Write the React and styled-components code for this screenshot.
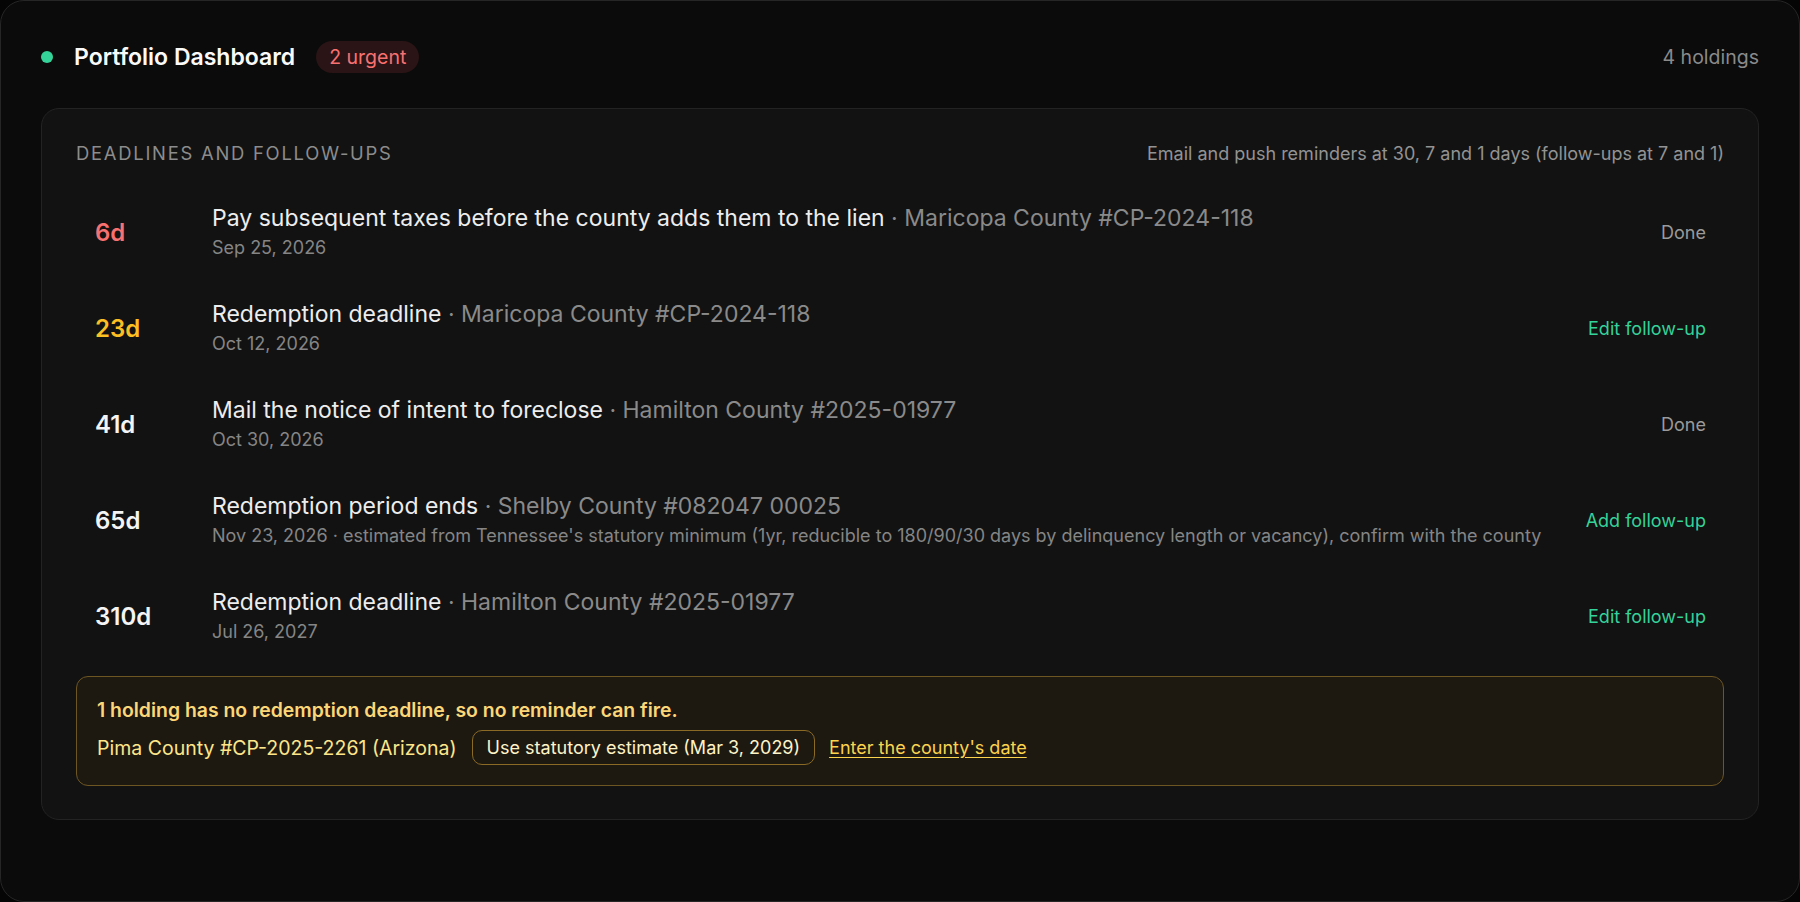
import React from 'react';
import styled, { createGlobalStyle } from 'styled-components';

const GlobalStyle = createGlobalStyle`
  html, body {
    margin: 0;
    padding: 0;
    background: #050505;
  }
  * {
    box-sizing: border-box;
  }
  body {
    font-family: Inter, "Noto Sans", "Liberation Sans", sans-serif;
    -webkit-font-smoothing: antialiased;
  }
`;

const deadlines = [
  {
    days: '6d',
    tone: 'urgent',
    title: 'Pay subsequent taxes before the county adds them to the lien',
    holding: 'Maricopa County #CP-2024-118',
    date: 'Sep 25, 2026',
    action: 'Done',
  },
  {
    days: '23d',
    tone: 'soon',
    title: 'Redemption deadline',
    holding: 'Maricopa County #CP-2024-118',
    date: 'Oct 12, 2026',
    action: 'Edit follow-up',
  },
  {
    days: '41d',
    title: 'Mail the notice of intent to foreclose',
    holding: 'Hamilton County #2025-01977',
    date: 'Oct 30, 2026',
    action: 'Done',
  },
  {
    days: '65d',
    title: 'Redemption period ends',
    holding: 'Shelby County #082047 00025',
    date: "Nov 23, 2026 · estimated from Tennessee's statutory minimum (1yr, reducible to 180/90/30 days by delinquency length or vacancy), confirm with the county",
    action: 'Add follow-up',
  },
  {
    days: '310d',
    title: 'Redemption deadline',
    holding: 'Hamilton County #2025-01977',
    date: 'Jul 26, 2027',
    action: 'Edit follow-up',
  },
];

const dayColors = {
  urgent: '#f87171',
  soon: '#fbbf24',
  normal: '#f4f4f5',
};

const App = () => {
  return (
    <>
      <GlobalStyle />
      <Frame>
        <Header>
          <HeaderLeft>
            <StatusDot />
            <Title>Portfolio Dashboard</Title>
            <UrgentBadge>2 urgent</UrgentBadge>
          </HeaderLeft>
          <HoldingCount>4 holdings</HoldingCount>
        </Header>

        <Panel>
          <PanelHead>
            <Caption>Deadlines and follow-ups</Caption>
            <Hint>Email and push reminders at 30, 7 and 1 days (follow-ups at 7 and 1)</Hint>
          </PanelHead>

          <List>
            {deadlines.map((d, i) => (
              <Row key={i}>
                <Days $color={dayColors[d.tone || 'normal']}>{d.days}</Days>
                <Body>
                  <RowTitle>
                    {d.title}
                    <Holding> · {d.holding}</Holding>
                  </RowTitle>
                  <RowDate>{d.date}</RowDate>
                </Body>
                <Action $done={d.action === 'Done'}>{d.action}</Action>
              </Row>
            ))}
          </List>

          <Warning>
            <WarningTitle>1 holding has no redemption deadline, so no reminder can fire.</WarningTitle>
            <WarningLine>
              <WarningHolding>Pima County #CP-2025-2261 (Arizona)</WarningHolding>
              <EstimateButton>Use statutory estimate (Mar 3, 2029)</EstimateButton>
              <DateLink>Enter the county's date</DateLink>
            </WarningLine>
          </Warning>
        </Panel>
      </Frame>
    </>
  );
};

const Frame = styled.div`
  height: 902px;
  background: #0b0b0b;
  border: 1px solid #262626;
  border-radius: 24px;
  padding: 24px 40px 0;
`;

const Header = styled.header`
  height: 64px;
  display: flex;
  align-items: center;
  justify-content: space-between;
  margin-bottom: 19px;
`;

const HeaderLeft = styled.div`
  display: flex;
  align-items: center;
`;

const StatusDot = styled.span`
  width: 12px;
  height: 12px;
  border-radius: 50%;
  background: #34d399;
  margin-right: 21px;
`;

const Title = styled.h1`
  margin: 0 21px 0 0;
  font-size: 23px;
  font-weight: 600;
  color: #fafafa;
`;

const UrgentBadge = styled.span`
  height: 32px;
  display: inline-flex;
  align-items: center;
  padding: 0 13px;
  border-radius: 999px;
  background: #2a1415;
  color: #f87171;
  font-size: 19.5px;
`;

const HoldingCount = styled.span`
  font-size: 19.5px;
  color: #8a8a8a;
`;

const Panel = styled.section`
  background: #121212;
  border: 1px solid #232323;
  border-radius: 18px;
  padding: 32px 34px 33px;
`;

const PanelHead = styled.div`
  display: flex;
  align-items: center;
  justify-content: space-between;
  height: 24px;
  margin-bottom: 19px;
`;

const Caption = styled.h2`
  margin: 0;
  font-size: 18.4px;
  font-weight: 400;
  text-transform: uppercase;
  letter-spacing: 0.095em;
  color: #8c8c8c;
`;

const Hint = styled.span`
  font-size: 18px;
  color: #939393;
`;

const List = styled.div`
  display: flex;
  flex-direction: column;
`;

const Row = styled.div`
  display: flex;
  align-items: center;
  height: 96px;
  padding: 0 18px 0 19px;
`;

const Days = styled.span`
  width: 117px;
  flex-shrink: 0;
  font-size: 24px;
  font-weight: 600;
  color: ${({ $color }) => $color};
`;

const Body = styled.div`
  flex: 1;
  min-width: 0;
  display: flex;
  flex-direction: column;
  gap: 2px;
`;

const RowTitle = styled.div`
  font-size: 23px;
  line-height: 30px;
  color: #ededed;
`;

const Holding = styled.span`
  color: #8a8a8a;
`;

const RowDate = styled.div`
  font-size: 18px;
  line-height: 26px;
  color: #858585;
`;

const Action = styled.button`
  flex-shrink: 0;
  margin-left: 24px;
  padding: 0;
  border: 0;
  background: none;
  font-family: inherit;
  font-size: 18px;
  color: ${({ $done }) => ($done ? '#9a9a9a' : '#34d399')};
  cursor: pointer;
`;

const Warning = styled.div`
  margin-top: 12px;
  padding: 20px;
  border: 1px solid #6e5623;
  border-radius: 12px;
  background: #1d1911;
  display: flex;
  flex-direction: column;
  gap: 6px;
`;

const WarningTitle = styled.div`
  font-size: 19.4px;
  line-height: 27px;
  font-weight: 600;
  color: #fcd778;
`;

const WarningLine = styled.div`
  display: flex;
  align-items: center;
`;

const WarningHolding = styled.span`
  margin-right: 15px;
  font-size: 19.5px;
  color: #fde68a;
`;

const EstimateButton = styled.button`
  height: 35px;
  margin-right: 14px;
  padding: 0 14px;
  border: 1px solid #8a6a24;
  border-radius: 10px;
  background: transparent;
  font-family: inherit;
  font-size: 18px;
  color: #fef3c7;
  cursor: pointer;
`;

const DateLink = styled.a`
  font-size: 18px;
  color: #fcd34d;
  text-decoration: underline;
  text-underline-offset: 3px;
  cursor: pointer;
`;

export default App;
